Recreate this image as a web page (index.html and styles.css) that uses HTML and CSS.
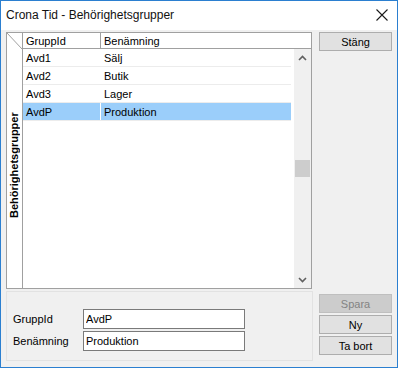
FILE: index.html
```html
<!DOCTYPE html>
<html lang="sv">

<head>
    <meta charset="UTF-8">
    <meta name="viewport" content="width=device-width, initial-scale=1.0">
    <title>Crona Tid - Behörighetsgrupper</title>
    <link rel="stylesheet" href="styles.css">
</head>

<body>
    <div class="window">
        <div class="titlebar">
            <span class="title">Crona Tid - Behörighetsgrupper</span>
            <span class="close">
                <svg width="12" height="12" viewBox="0 0 12 12">
                    <path d="M0.5 0.5L11.5 11.5M11.5 0.5L0.5 11.5" stroke="#1a1a1a" stroke-width="1.1" fill="none" />
                </svg>
            </span>
        </div>
        <div class="content">
            <div class="main">
                <div class="grid">
                    <div class="tab">
                        <div class="corner">
                            <svg width="15" height="16" viewBox="0 0 15 16">
                                <path d="M0 0L15 16" stroke="#a0a0a0" stroke-width="1" fill="none" />
                            </svg>
                        </div>
                        <div class="tab-label">Behörighetsgrupper</div>
                    </div>
                    <div class="table">
                        <div class="head">
                            <div class="cell c1">GruppId</div>
                            <div class="cell c2">Benämning</div>
                        </div>
                        <div class="body">
                            <div class="rows">
                                <div class="row">
                                    <div class="cell c1">Avd1</div>
                                    <div class="cell c2">Sälj</div>
                                </div>
                                <div class="row">
                                    <div class="cell c1">Avd2</div>
                                    <div class="cell c2">Butik</div>
                                </div>
                                <div class="row">
                                    <div class="cell c1">Avd3</div>
                                    <div class="cell c2">Lager</div>
                                </div>
                                <div class="row selected">
                                    <div class="cell c1">AvdP</div>
                                    <div class="cell c2">Produktion</div>
                                </div>
                            </div>
                            <div class="scroll">
                                <div class="arrow">
                                    <svg width="9" height="6" viewBox="0 0 9 6">
                                        <path d="M1 5L4.5 1.5L8 5" stroke="#606060" stroke-width="1.6" fill="none" />
                                    </svg>
                                </div>
                                <div class="track">
                                    <div class="thumb"></div>
                                </div>
                                <div class="arrow">
                                    <svg width="9" height="6" viewBox="0 0 9 6">
                                        <path d="M1 1L4.5 4.5L8 1" stroke="#606060" stroke-width="1.6" fill="none" />
                                    </svg>
                                </div>
                            </div>
                        </div>
                    </div>
                </div>
                <div class="edit">
                    <div class="field">
                        <label for="gruppId">GruppId</label>
                        <input type="text" id="gruppId" value="AvdP">
                    </div>
                    <div class="field">
                        <label for="benamning">Benämning</label>
                        <input type="text" id="benamning" value="Produktion">
                    </div>
                </div>
            </div>
            <div class="side">
                <button class="btn">Stäng</button>
                <div class="actions">
                    <button class="btn" disabled>Spara</button>
                    <button class="btn">Ny</button>
                    <button class="btn">Ta bort</button>
                </div>
            </div>
        </div>
    </div>
</body>

</html>
```

FILE: styles.css
```css
body {
    margin: 0;
    padding: 0;
    font-family: "Liberation Sans", Arial, sans-serif;
    font-size: 11px;
    color: #000;
    background-color: #fff;
}

.window {
    width: 398px;
    height: 368px;
    box-sizing: border-box;
    border: 1px solid #2b7fd0;
    display: flex;
    flex-direction: column;
    background-color: #f0f0f0;
}

.titlebar {
    height: 29px;
    box-sizing: border-box;
    background-color: #fff;
    display: flex;
    align-items: center;
    justify-content: space-between;
    padding: 0 9px 2px 5px;
}

.title {
    font-size: 12px;
    color: #111;
}

.close {
    display: flex;
}

.content {
    flex: 1;
    display: flex;
    padding: 2px 0 0 5px;
}

.main {
    width: 307px;
    display: flex;
    flex-direction: column;
}

/* grid */
.grid {
    width: 306px;
    height: 257px;
    box-sizing: border-box;
    border: 1px solid #a0a0a0;
    background-color: #fff;
    display: flex;
}

.tab {
    width: 15px;
    border-right: 1px solid #a0a0a0;
    display: flex;
    flex-direction: column;
}

.corner {
    height: 16px;
    display: flex;
}

.tab-label {
    flex: 1;
    writing-mode: vertical-rl;
    transform: rotate(180deg);
    font-weight: bold;
    text-align: center;
    line-height: 15px;
    padding-top: 6px;
}

.table {
    flex: 1;
    display: flex;
    flex-direction: column;
}

.head {
    height: 15px;
    border-bottom: 1px solid #a0a0a0;
    display: flex;
}

.cell {
    padding-left: 3px;
    display: flex;
    align-items: center;
    white-space: nowrap;
}

.c1 {
    width: 74px;
}

.head .c1 {
    border-right: 1px solid #a0a0a0;
}

.body {
    flex: 1;
    display: flex;
}

.rows {
    flex: 1;
}

.row {
    height: 17px;
    border-bottom: 1px solid #ececec;
    display: flex;
    margin-right: 3px;
}

.row .c1 {
    border-right: 1px solid #fff;
}

.row.selected {
    background-color: #9bcefa;
}

.scroll {
    width: 17px;
    background-color: #f0f0f0;
    display: flex;
    flex-direction: column;
}

.arrow {
    height: 17px;
    display: flex;
    align-items: center;
    justify-content: center;
}

.track {
    flex: 1;
}

.thumb {
    width: 15px;
    height: 17px;
    margin: 94px 1px 0;
    background-color: #cdcdcd;
}

/* edit panel */
.edit {
    margin-top: 2px;
    height: 70px;
    box-sizing: border-box;
    border: 1px solid #e2e2e2;
    padding: 17px 0 0 6px;
    display: flex;
    flex-direction: column;
    gap: 2px;
}

.field {
    display: flex;
    align-items: center;
}

.field label {
    width: 70px;
}

.field input {
    width: 162px;
    height: 20px;
    box-sizing: border-box;
    border: 1px solid #7a7a7a;
    padding: 0 2px;
    margin: 0;
    font-family: inherit;
    font-size: 11px;
    color: #000;
    background-color: #fff;
}

/* buttons */
.side {
    width: 73px;
    margin-left: 6px;
    display: flex;
    flex-direction: column;
}

.actions {
    margin-top: auto;
    margin-bottom: 12px;
    display: flex;
    flex-direction: column;
    gap: 2px;
}

.btn {
    height: 19px;
    padding: 0;
    border: 1px solid #adadad;
    background-color: #e1e1e1;
    font-family: inherit;
    font-size: 11px;
    color: #000;
}

.btn:disabled {
    background-color: #cccccc;
    border-color: #bfbfbf;
    color: #838383;
}
```
